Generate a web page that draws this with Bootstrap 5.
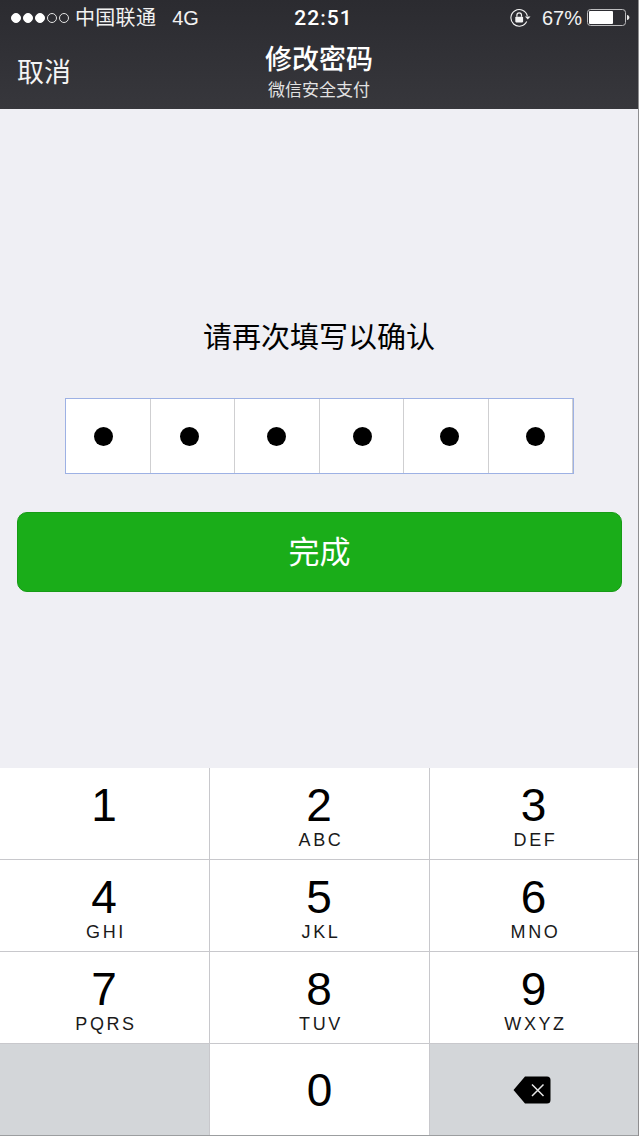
<!doctype html>
<html lang="zh">
<head>
<meta charset="utf-8">
<link href="https://cdn.jsdelivr.net/npm/bootstrap@5.3.0/dist/css/bootstrap.min.css" rel="stylesheet">
<style>
html,body{height:100%;}
body{width:639px;height:1136px;overflow:hidden;background:#efeff4;font-family:"Liberation Sans","Noto Sans CJK SC",sans-serif;color:#000;border-right:1px solid #8e8e90;}
.app-top{height:109px;background:linear-gradient(#2b2b30,#37373c);color:#fff;}
.status-bar{height:36px;padding:0 8px 0 11px;font-size:20px;line-height:36px;color:#f2f2f2;}
.sig-dot{display:inline-block;flex:none;width:10px;height:10px;border-radius:50%;border:1px solid #e4e4e4;margin-right:2px;}
.sig-dot.on{background:#fff;border-color:#fff;}
.carrier{margin-left:4px;letter-spacing:.3px;}
.net{margin-left:16px;}
.clock{font-family:Roboto,"Liberation Sans",sans-serif;font-size:21px;font-weight:500;letter-spacing:1px;color:#fff;margin-left:6px;}
.pct{margin:0 5px 0 11px;font-size:20px;}
.status-left,.status-right{width:250px;}
.title-row{height:73px;position:relative;}
.cancel{font-size:27px;line-height:1;padding:2px 0 0 17px;color:#f4f4f4;}
.title-box{position:absolute;left:0;right:0;top:6px;text-align:center;}
.title-main{font-size:27px;line-height:36px;font-weight:500;}
.title-sub{font-size:17px;line-height:22px;color:#e2e2e2;margin-top:2px;}
.pay-main{height:659px;padding-top:211px;}
.prompt{font-size:29px;line-height:36px;text-align:center;margin-bottom:42px;}
.pin-box{position:relative;width:509px;height:76px;margin:0 0 0 65px;background:#fff;border:1px solid #9db1e4;}
.pin-cell{flex:1 1 0;border-right:1px solid #cfcfd1;}
.pin-cell:last-child{border-right:0;}
.pin-dots{position:absolute;inset:0;padding:0 27.500px;}
.pin-dot{width:19px;height:19px;border-radius:50%;background:#000;}
.done-btn{display:block;width:605px;height:80px;margin:38px 0 0 17px;background:#1aad19;border:1px solid #179b16;border-radius:10px;color:#fff;font-size:31px;line-height:1;padding:1px 0 0;}
.done-btn:hover{background:#1aad19;border-color:#179b16;color:#fff;}
.keypad{height:368px;background:#fff;}
.key-row{height:92px;border-bottom:1px solid #c8c8cc;}
.pad-key{flex:0 0 220px;border-right:1px solid #c8c8cc;text-align:center;height:100%;}
.pad-key:first-child{flex-basis:210px;}
.pad-key:last-child{flex:1 1 0;border-right:0;}
.pad-key.fn{background:#d3d6d9;}
.num{font-size:46px;line-height:46px;padding-top:14px;height:62px;margin-right:1px;}
.abc{font-size:18px;line-height:20px;letter-spacing:2.600px;padding-left:3px;color:#1a1a1a;}
.zero .num{padding-top:0;height:auto;margin-right:0;}
.bksp{margin-right:5px;}
.key-row:last-child{border-bottom-color:#9c9ea0;}
</style>
</head>
<body>
<header class="app-top">
  <div class="status-bar d-flex justify-content-between align-items-center">
    <div class="status-left d-flex align-items-center">
      <span class="sig-dot on"></span><span class="sig-dot on"></span><span class="sig-dot on"></span><span class="sig-dot"></span><span class="sig-dot"></span>
      <span class="carrier">中国联通</span><span class="net">4G</span>
    </div>
    <div class="clock">22:51</div>
    <div class="status-right d-flex align-items-center justify-content-end">
      <svg width="21" height="18" viewBox="0 0 21 18" fill="none"><path d="M16.700 12.500A8.300 8.300 0 1 1 17.300 7" stroke="#f2f2f2" stroke-width="1.100"/><path d="M15 7.600h5.500l-2.750 3z" fill="#f2f2f2"/><rect x="5.300" y="7.800" width="7.800" height="5.600" rx=".8" fill="#f2f2f2"/><path d="M6.900 7.800V6.100a2.300 2.300 0 0 1 4.600 0v1.700" stroke="#f2f2f2" stroke-width="1.200"/></svg>
      <span class="pct">67%</span>
      <svg width="43" height="18" viewBox="0 0 43 18"><rect x=".5" y=".5" width="38" height="16" rx="3" fill="none" stroke="#bdbdbf"/><rect x="2" y="2" width="24" height="13" rx="1" fill="#fff"/><path d="M40 6c1.600.3 2.400 1.300 2.400 2.500S41.600 10.700 40 11z" fill="#e8e8e8"/></svg>
    </div>
  </div>
  <div class="title-row d-flex align-items-center">
    <div class="cancel">取消</div>
    <div class="title-box">
      <div class="title-main">修改密码</div>
      <div class="title-sub">微信安全支付</div>
    </div>
  </div>
</header>
<main class="pay-main">
  <div class="prompt">请再次填写以确认</div>
  <div class="pin-box d-flex">
    <div class="pin-cell"></div>
    <div class="pin-cell"></div>
    <div class="pin-cell"></div>
    <div class="pin-cell"></div>
    <div class="pin-cell"></div>
    <div class="pin-cell"></div>
    <div class="pin-dots d-flex align-items-center justify-content-between">
      <span class="pin-dot"></span><span class="pin-dot"></span><span class="pin-dot"></span><span class="pin-dot"></span><span class="pin-dot"></span><span class="pin-dot"></span>
    </div>
  </div>
  <button type="button" class="btn done-btn">完成</button>
</main>
<section class="keypad">
  <div class="key-row d-flex">
    <div class="pad-key"><div class="num">1</div></div>
    <div class="pad-key"><div class="num">2</div><div class="abc">ABC</div></div>
    <div class="pad-key"><div class="num">3</div><div class="abc">DEF</div></div>
  </div>
  <div class="key-row d-flex">
    <div class="pad-key"><div class="num">4</div><div class="abc">GHI</div></div>
    <div class="pad-key"><div class="num">5</div><div class="abc">JKL</div></div>
    <div class="pad-key"><div class="num">6</div><div class="abc">MNO</div></div>
  </div>
  <div class="key-row d-flex">
    <div class="pad-key"><div class="num">7</div><div class="abc">PQRS</div></div>
    <div class="pad-key"><div class="num">8</div><div class="abc">TUV</div></div>
    <div class="pad-key"><div class="num">9</div><div class="abc">WXYZ</div></div>
  </div>
  <div class="key-row d-flex">
    <div class="pad-key fn"></div>
    <div class="pad-key zero d-flex align-items-center justify-content-center"><div class="num">0</div></div>
    <div class="pad-key fn d-flex align-items-center justify-content-center">
      <svg class="bksp" width="38" height="28" viewBox="0 0 38 28"><path d="M12 .5h22a3.500 3.500 0 0 1 3.500 3.500v20a3.500 3.500 0 0 1-3.500 3.500H12L.5 14z" fill="#000"/><path d="M19 8.500l11.500 11.500M30.500 8.500L19 20" stroke="#e6e6e6" stroke-width="1.500"/></svg>
    </div>
  </div>
</section>
<script src="https://cdn.jsdelivr.net/npm/bootstrap@5.3.0/dist/js/bootstrap.bundle.min.js"></script>
</body>
</html>
